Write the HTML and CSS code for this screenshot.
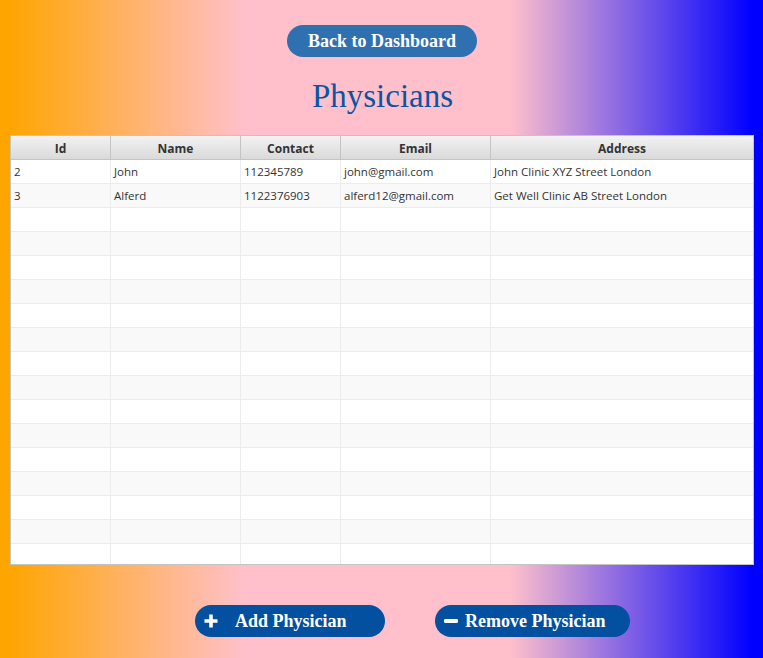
FILE: index.html
```html
<!DOCTYPE html>
<html>
<head>
<meta charset="utf-8">
<link rel="stylesheet" href="styles.css">
</head>
<body>
<div class="page">
  <div class="top">
    <button class="btn btn-back">Back to Dashboard</button>
    <h1 class="title">Physicians</h1>
  </div>
  <div class="table">
    <div class="row head">
      <div class="cell">Id</div>
      <div class="cell">Name</div>
      <div class="cell">Contact</div>
      <div class="cell">Email</div>
      <div class="cell">Address</div>
    </div>
    <div class="row">
      <div class="cell">2</div>
      <div class="cell">John</div>
      <div class="cell">112345789</div>
      <div class="cell">john@gmail.com</div>
      <div class="cell">John Clinic XYZ Street London</div>
    </div>
    <div class="row">
      <div class="cell">3</div>
      <div class="cell">Alferd</div>
      <div class="cell">1122376903</div>
      <div class="cell">alferd12@gmail.com</div>
      <div class="cell">Get Well Clinic AB Street London</div>
    </div>
    <div class="row"><div class="cell"></div><div class="cell"></div><div class="cell"></div><div class="cell"></div><div class="cell"></div></div>
    <div class="row"><div class="cell"></div><div class="cell"></div><div class="cell"></div><div class="cell"></div><div class="cell"></div></div>
    <div class="row"><div class="cell"></div><div class="cell"></div><div class="cell"></div><div class="cell"></div><div class="cell"></div></div>
    <div class="row"><div class="cell"></div><div class="cell"></div><div class="cell"></div><div class="cell"></div><div class="cell"></div></div>
    <div class="row"><div class="cell"></div><div class="cell"></div><div class="cell"></div><div class="cell"></div><div class="cell"></div></div>
    <div class="row"><div class="cell"></div><div class="cell"></div><div class="cell"></div><div class="cell"></div><div class="cell"></div></div>
    <div class="row"><div class="cell"></div><div class="cell"></div><div class="cell"></div><div class="cell"></div><div class="cell"></div></div>
    <div class="row"><div class="cell"></div><div class="cell"></div><div class="cell"></div><div class="cell"></div><div class="cell"></div></div>
    <div class="row"><div class="cell"></div><div class="cell"></div><div class="cell"></div><div class="cell"></div><div class="cell"></div></div>
    <div class="row"><div class="cell"></div><div class="cell"></div><div class="cell"></div><div class="cell"></div><div class="cell"></div></div>
    <div class="row"><div class="cell"></div><div class="cell"></div><div class="cell"></div><div class="cell"></div><div class="cell"></div></div>
    <div class="row"><div class="cell"></div><div class="cell"></div><div class="cell"></div><div class="cell"></div><div class="cell"></div></div>
    <div class="row"><div class="cell"></div><div class="cell"></div><div class="cell"></div><div class="cell"></div><div class="cell"></div></div>
    <div class="row"><div class="cell"></div><div class="cell"></div><div class="cell"></div><div class="cell"></div><div class="cell"></div></div>
    <div class="row"><div class="cell"></div><div class="cell"></div><div class="cell"></div><div class="cell"></div><div class="cell"></div></div>
  </div>
  <div class="actions">
    <button class="btn btn-action btn-add">
      <svg class="ico" width="14" height="14" viewBox="0 0 14 14"><path d="M7 0.5V13.5M0.5 7H13.5" stroke="#fff" stroke-width="3.6" fill="none"/></svg>
      <span class="lbl lbl-add">Add Physician</span>
    </button>
    <button class="btn btn-action btn-remove">
      <svg class="ico" width="14" height="14" viewBox="0 0 14 14"><path d="M1.5 7H12.5" stroke="#fff" stroke-width="3.8" stroke-linecap="round" fill="none"/></svg>
      <span class="lbl lbl-remove">Remove Physician</span>
    </button>
  </div>
</div>
</body>
</html>
```
FILE: styles.css
```css
html, body {
  margin: 0;
  padding: 0;
}
body {
  width: 763px;
  height: 658px;
  overflow: hidden;
  background: linear-gradient(to right, #ffa500 0px, #ffa500 8px, #ffc0cb 245px, #ffc0cb 510px, #0000ff 752px);
}
.page {
  display: flex;
  flex-direction: column;
  height: 658px;
}
.top {
  display: flex;
  flex-direction: column;
  align-items: center;
  padding-top: 25px;
}
.btn {
  border: none;
  color: #fff;
  font-family: "Liberation Serif", "Times New Roman", serif;
  font-weight: bold;
  font-size: 18px;
  border-radius: 16px;
  height: 32px;
  padding: 0;
  cursor: pointer;
}
.btn-back {
  width: 190px;
  background: #2f70b1;
  margin-left: 1px;
}
.title {
  margin: 0;
  height: 78px;
  line-height: 78px;
  font-family: "Liberation Serif", "Times New Roman", serif;
  font-weight: normal;
  font-size: 33px;
  color: #0a55a3;
  padding-left: 2px;
}
.table {
  margin-left: 10px;
  width: 742px;
  height: 428px;
  border: 1px solid #c4c4c4;
  background: #fff;
  overflow: hidden;
  display: flex;
  flex-direction: column;
}
.row {
  display: grid;
  grid-template-columns: 100px 130px 100px 150px 1fr;
  height: 24px;
  flex: none;
  box-sizing: border-box;
  border-bottom: 1px solid #ececec;
  background: #fff;
}
.row:nth-child(odd) {
  background: #f9f9f9;
}
.row.head {
  background: linear-gradient(to bottom, #f2f2f2, #dadada);
  border-bottom: 1px solid #c4c4c4;
}
.cell {
  box-sizing: border-box;
  border-right: 1px solid #ececec;
  font-family: "Open Sans", "Noto Sans", sans-serif;
  font-size: 11.5px;
  color: #333;
  line-height: 23px;
  padding-left: 3px;
  white-space: nowrap;
  overflow: hidden;
}
.cell:last-child {
  border-right: none;
}
.head .cell {
  border-right: 1px solid #c4c4c4;
  font-weight: bold;
  text-align: center;
  padding-left: 0;
  padding-top: 1px;
  font-size: 12px;
  color: #333;
}
.head .cell:last-child {
  border-right: none;
}
.actions {
  display: flex;
  padding-left: 195px;
  gap: 50px;
  margin-top: 40px;
}
.btn-action {
  background: #02509f;
  display: flex;
  align-items: center;
  padding-left: 9px;
}
.btn-add {
  width: 190px;
}
.btn-remove {
  width: 195px;
}
.ico {
  flex: none;
}
.lbl-add {
  margin-left: 17px;
}
.lbl-remove {
  margin-left: 7px;
}
```
